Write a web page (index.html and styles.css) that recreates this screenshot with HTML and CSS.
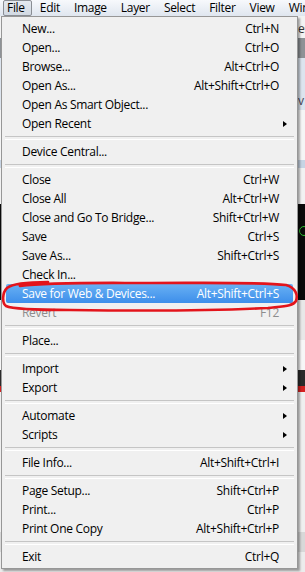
FILE: index.html
```html
<!DOCTYPE html>
<html>
<head>
<meta charset="utf-8">
<link rel="stylesheet" href="styles.css">
</head>
<body>
<div class="app">
  <div class="menubar">
    <span class="mb-item active">File</span>
    <span class="mb-item">Edit</span>
    <span class="mb-item">Image</span>
    <span class="mb-item">Layer</span>
    <span class="mb-item">Select</span>
    <span class="mb-item">Filter</span>
    <span class="mb-item">View</span>
    <span class="mb-item">Window</span>
  </div>
  <div class="workspace">
    <div class="ws ws-a"><span class="ws-text">es</span></div>
    <div class="ws ws-b"></div>
    <div class="ws ws-c"><span class="ws-text">v</span></div>
    <div class="ws ws-d"></div>
    <div class="ws ws-e"></div>
    <div class="ws ws-f"></div>
    <div class="ws ws-g"><span class="ring"></span></div>
    <div class="ws ws-h"></div>
    <div class="ws ws-i"></div>
    <div class="ws ws-j"></div>
    <div class="ws ws-k"></div>
    <div class="ws ws-l"></div>
    <div class="ws ws-m"></div>
  </div>

  <div class="menu">
    <div class="item"><span class="label">New...</span><span class="key">Ctrl+N</span><span class="sub"></span></div>
    <div class="item"><span class="label">Open...</span><span class="key">Ctrl+O</span><span class="sub"></span></div>
    <div class="item"><span class="label">Browse...</span><span class="key">Alt+Ctrl+O</span><span class="sub"></span></div>
    <div class="item"><span class="label">Open As...</span><span class="key">Alt+Shift+Ctrl+O</span><span class="sub"></span></div>
    <div class="item"><span class="label">Open As Smart Object...</span><span class="key"></span><span class="sub"></span></div>
    <div class="item"><span class="label">Open Recent</span><span class="key"></span><span class="sub"><i class="arrow"></i></span></div>
    <div class="sep"></div>
    <div class="item"><span class="label">Device Central...</span><span class="key"></span><span class="sub"></span></div>
    <div class="sep"></div>
    <div class="item"><span class="label">Close</span><span class="key">Ctrl+W</span><span class="sub"></span></div>
    <div class="item"><span class="label">Close All</span><span class="key">Alt+Ctrl+W</span><span class="sub"></span></div>
    <div class="item"><span class="label">Close and Go To Bridge...</span><span class="key">Shift+Ctrl+W</span><span class="sub"></span></div>
    <div class="item"><span class="label">Save</span><span class="key">Ctrl+S</span><span class="sub"></span></div>
    <div class="item"><span class="label">Save As...</span><span class="key">Shift+Ctrl+S</span><span class="sub"></span></div>
    <div class="item"><span class="label">Check In...</span><span class="key"></span><span class="sub"></span></div>
    <div class="item hl"><span class="label">Save for Web &amp; Devices...</span><span class="key">Alt+Shift+Ctrl+S</span><span class="sub"></span></div>
    <div class="item disabled"><span class="label">Revert</span><span class="key">F12</span><span class="sub"></span></div>
    <div class="sep"></div>
    <div class="item"><span class="label">Place...</span><span class="key"></span><span class="sub"></span></div>
    <div class="sep"></div>
    <div class="item"><span class="label">Import</span><span class="key"></span><span class="sub"><i class="arrow"></i></span></div>
    <div class="item"><span class="label">Export</span><span class="key"></span><span class="sub"><i class="arrow"></i></span></div>
    <div class="sep"></div>
    <div class="item"><span class="label">Automate</span><span class="key"></span><span class="sub"><i class="arrow"></i></span></div>
    <div class="item"><span class="label">Scripts</span><span class="key"></span><span class="sub"><i class="arrow"></i></span></div>
    <div class="sep"></div>
    <div class="item"><span class="label">File Info...</span><span class="key">Alt+Shift+Ctrl+I</span><span class="sub"></span></div>
    <div class="sep"></div>
    <div class="item"><span class="label">Page Setup...</span><span class="key">Shift+Ctrl+P</span><span class="sub"></span></div>
    <div class="item"><span class="label">Print...</span><span class="key">Ctrl+P</span><span class="sub"></span></div>
    <div class="item"><span class="label">Print One Copy</span><span class="key">Alt+Shift+Ctrl+P</span><span class="sub"></span></div>
    <div class="sep"></div>
    <div class="item"><span class="label">Exit</span><span class="key">Ctrl+Q</span><span class="sub"></span></div>
  </div>

  <svg class="scribble" width="305" height="40" viewBox="0 0 305 40">
    <path d="M20 9 C 50 5, 100 6, 150 6 C 210 6, 262 5, 286 8 C 296 11, 298 18, 296 24 C 293 29, 286 29, 268 31 C 210 34, 140 34, 70 33 C 35 33, 12 32, 6 29 C 2 26, 2 16, 7 11 C 12 7, 28 5, 48 5" fill="none" stroke="#e3141b" stroke-width="2.6" stroke-linecap="round" stroke-linejoin="round"/>
  </svg>
</div>
</body>
</html>
```

FILE: styles.css
```css
* { box-sizing: border-box; }
html, body { margin: 0; padding: 0; }
body {
  width: 305px;
  height: 572px;
  overflow: hidden;
  font-family: "Open Sans", "Noto Sans", "DejaVu Sans", sans-serif;
  font-size: 12px;
  letter-spacing: -0.3px;
  color: #000;
}
.app {
  position: relative;
  width: 305px;
  height: 572px;
  overflow: hidden;
  display: flex;
  flex-direction: column;
}
.menubar {
  height: 16px;
  flex: none;
  display: flex;
  align-items: stretch;
  background: linear-gradient(#f7f9fc, #dfe6ef);
  padding-left: 3px;
  gap: 2px;
}
.mb-item {
  padding: 0 5px;
  line-height: 14px;
  white-space: nowrap;
  border: 1px solid transparent;
}
.mb-item.active {
  border-color: #8a8e94;
  border-radius: 2px;
  background: linear-gradient(#e4e9ef, #d2d9e2);
  padding: 0 6px 0 3px;
}
.workspace {
  flex: 1;
  display: flex;
  flex-direction: column;
  background: #ececec;
}
.ws { position: relative; flex: none; }
.ws-text { position: absolute; left: 298px; top: 4px; font-size: 12px; color: #333; }
.ws-a { height: 22px; background: #f3f3f3; }
.ws-b { height: 20px; background: #8e9296; }
.ws-c { height: 52px; background: #dce4ee; }
.ws-c .ws-text { top: 34px; color: #445; }
.ws-d { height: 50px; background: #f5f5f5; }
.ws-e { height: 8px; background: #c7d4e4; }
.ws-f { height: 36px; background: #f2f2f2; }
.ws-g { height: 96px; background: #0a0a0a; }
.ring { position: absolute; left: 299px; top: 22px; width: 10px; height: 10px; border: 1.5px solid #2fc22f; border-radius: 50%; }
.ws-h { height: 40px; background: #e8e8e8; }
.ws-i { height: 30px; background: #f7f7f7; }
.ws-j { height: 16px; background: #2a2a2a; }
.ws-k { height: 6px; background: #d42020; }
.ws-l { height: 140px; background: #efefef; }
.ws-m { height: 20px; background: #d8d8d8; }

.menu {
  position: absolute;
  left: 1px;
  top: 16px;
  width: 297px;
  padding: 2px;
  background: #f0f0f0;
  border: 1px solid #979797;
  box-shadow: 2px 2px 2px rgba(0, 0, 0, 0.35);
}
.item {
  height: 19px;
  display: grid;
  grid-template-columns: 1fr auto 16px;
  align-items: center;
  padding-left: 18px;
  white-space: nowrap;
  line-height: 19px;
}
.key { text-align: right; }
.sub { display: flex; align-items: center; justify-content: flex-start; }
.arrow {
  display: block;
  width: 0;
  height: 0;
  border-top: 3.5px solid transparent;
  border-bottom: 3.5px solid transparent;
  border-left: 4px solid #000;
  margin-left: 4px;
}
.item.hl {
  color: #fff;
  background: linear-gradient(#69b1f4, #3d8eea);
  border-radius: 2px;
  margin: 0 2px;
  padding-left: 16px;
  grid-template-columns: 1fr auto 14px;
}
.item.disabled { color: #8d8d8d; }
.sep {
  height: 9px;
  display: flex;
  align-items: center;
  padding: 0 1px;
}
.sep::before {
  content: "";
  display: block;
  width: 100%;
  height: 2px;
  border-top: 1px solid #c5c5c5;
  border-bottom: 1px solid #ffffff;
}
.scribble {
  position: absolute;
  left: 0;
  top: 277px;
}
```
